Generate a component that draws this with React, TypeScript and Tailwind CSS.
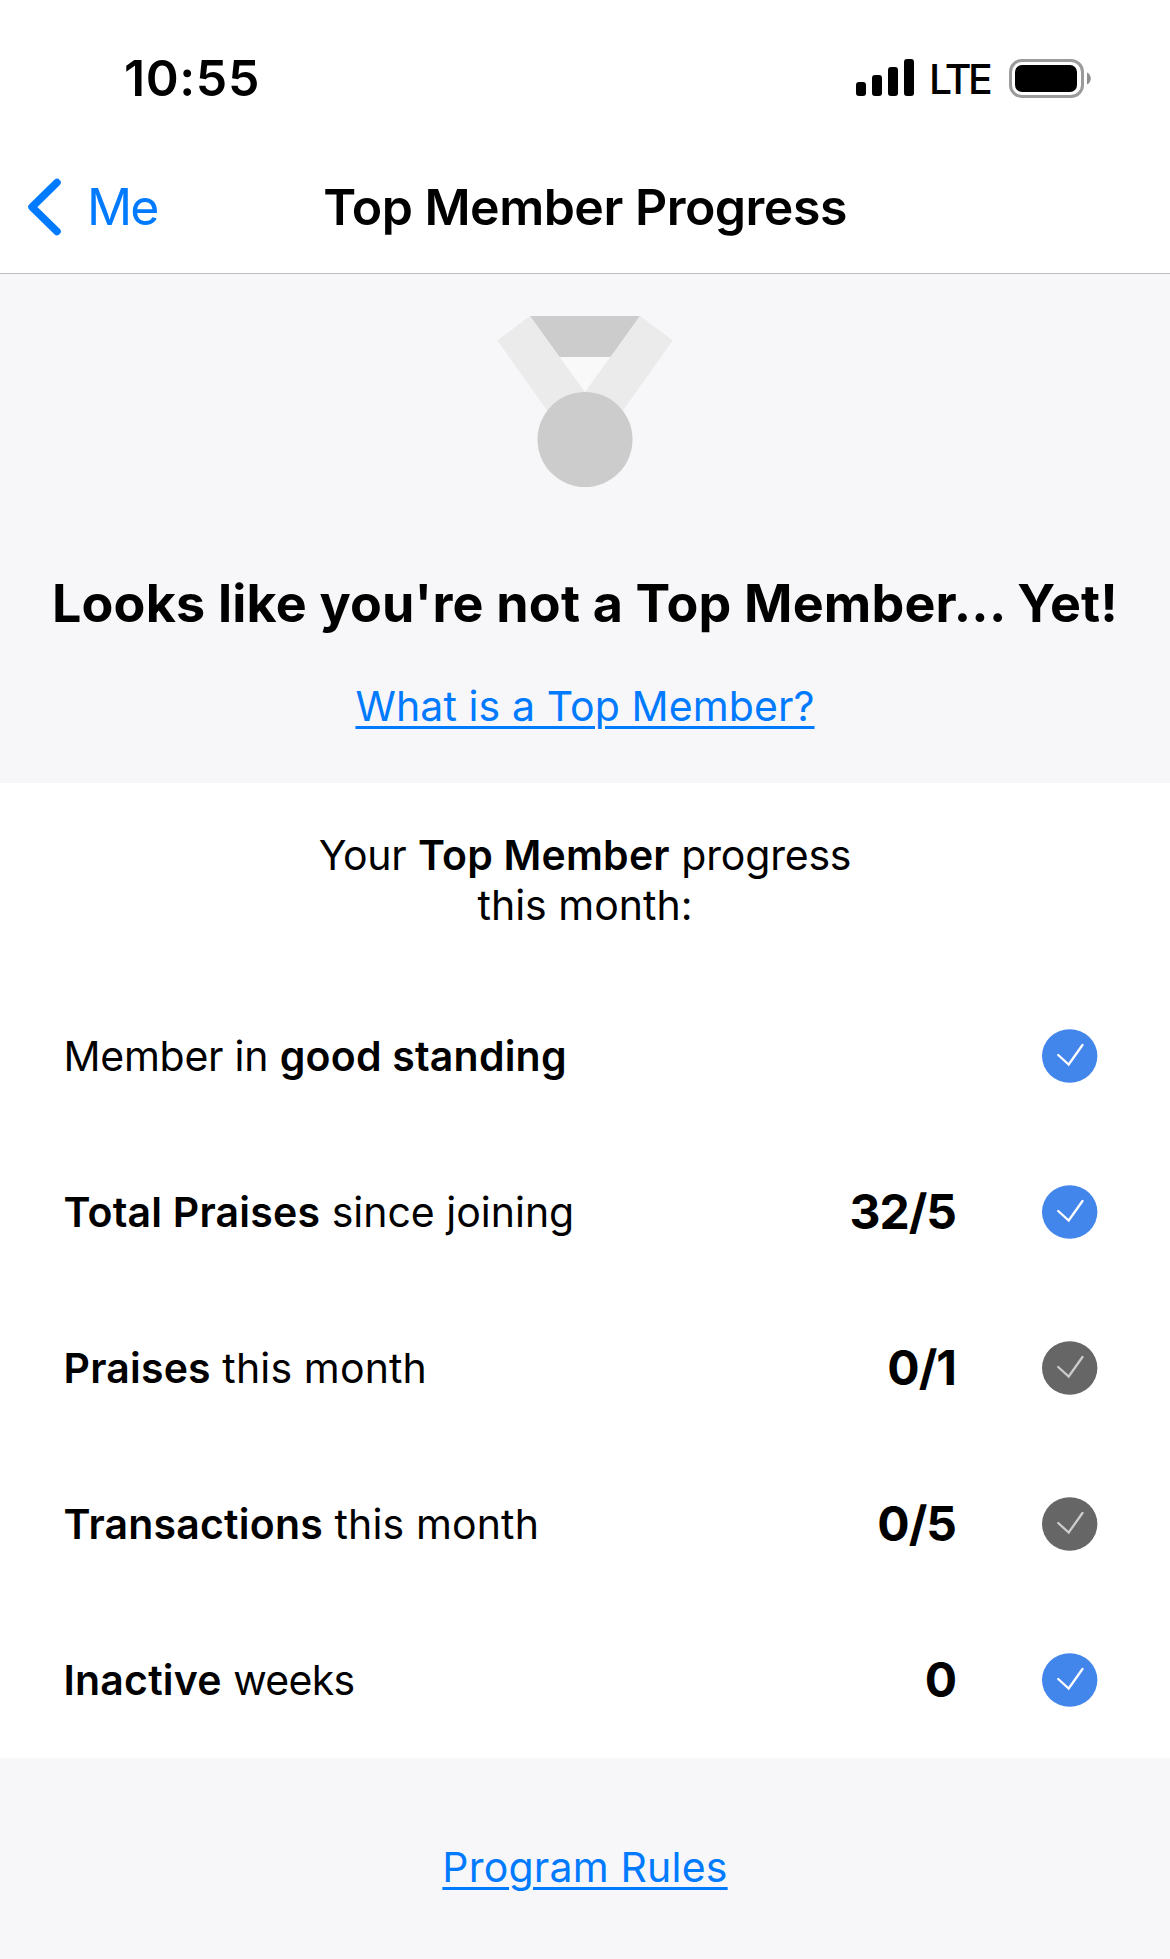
import type { ReactNode } from "react";
import clsx from "clsx";

type Requirement = {
  id: string;
  label: ReactNode;
  value?: string;
  done: boolean;
};

function Strong({ children }: { children: ReactNode }) {
  return <b className="font-semibold tracking-[0.2px]">{children}</b>;
}

const requirements: Requirement[] = [
  {
    id: "standing",
    label: (
      <>
        <span className="tracking-[-0.25px]">Member in</span> <Strong>good standing</Strong>
      </>
    ),
    done: true,
  },
  {
    id: "total",
    label: (
      <>
        <Strong>Total Praises</Strong> since joining
      </>
    ),
    value: "32/5",
    done: true,
  },
  {
    id: "praises",
    label: (
      <>
        <Strong>Praises</Strong> <span className="tracking-[0.15px]">this month</span>
      </>
    ),
    value: "0/1",
    done: false,
  },
  {
    id: "transactions",
    label: (
      <>
        <Strong>Transactions</Strong> <span className="tracking-[0.15px]">this month</span>
      </>
    ),
    value: "0/5",
    done: false,
  },
  {
    id: "inactive",
    label: (
      <>
        <Strong>Inactive</Strong> <span className="tracking-[-0.7px]">weeks</span>
      </>
    ),
    value: "0",
    done: true,
  },
];

function StatusBar() {
  return (
    <div className="flex h-[156px] items-center justify-between pr-[79px] pl-[124px]">
      <span className="text-[50px] leading-none font-semibold tracking-[0.6px]">10:55</span>
      <div className="flex items-center">
        <svg width="58" height="38" viewBox="0 0 58 38">
          <rect x="0" y="23" width="10" height="14" rx="3" />
          <rect x="16" y="16" width="10" height="21" rx="3" />
          <rect x="32" y="8" width="10" height="29" rx="3" />
          <rect x="48" y="0" width="10" height="37" rx="3" />
        </svg>
        <span className="ml-[15px] w-[65px] pt-0.5 text-[41px] leading-none font-medium tracking-[-3.6px]">
          LTE
        </span>
        <svg className="ml-[15px]" width="82" height="39" viewBox="0 0 82 39">
          <rect x="1.5" y="1.5" width="72" height="36" rx="11.5" fill="none" stroke="#9b9b9b" strokeWidth="3" />
          <rect x="6" y="6" width="62" height="27" rx="7" />
          <path d="M78 13.5c5 2 5 10 0 12z" fill="#8e8e8e" />
        </svg>
      </div>
    </div>
  );
}

function NavBar() {
  return (
    <nav className="grid h-[118px] grid-cols-[1fr_auto_1fr] border-b border-[#bcbcbf] pb-[15px]">
      <button type="button" className="flex items-center pl-[26px] text-[#007aff]">
        <svg width="37" height="58" viewBox="0 0 37 58" fill="none">
          <path
            d="M31 4.5 6 29l25 24.5"
            stroke="currentColor"
            strokeWidth="7.5"
            strokeLinecap="round"
            strokeLinejoin="round"
          />
        </svg>
        <span className="ml-[24px] text-[50px] leading-none tracking-[-2px]">Me</span>
      </button>
      <h1 className="self-center text-[50px] leading-none font-semibold tracking-[-0.5px]">
        Top Member Progress
      </h1>
    </nav>
  );
}

function Medal() {
  return (
    <svg width="176" height="171" viewBox="0 0 176 171">
      <path d="M33 0h110l-29 41H62z" fill="#ccc" />
      <path d="M62 41h52L88 77z" fill="#f9f9fa" />
      <path d="M.3 24.5 33 0l55 76v43H67.500z" fill="#ebebeb" />
      <path d="M175.700 24.500 143 0 88 76v43h20.500z" fill="#ebebeb" />
      <circle cx="88" cy="123.500" r="47.500" fill="#ccc" />
    </svg>
  );
}

function CheckBadge({ done }: { done: boolean }) {
  return (
    <svg width="56" height="54" viewBox="0 0 56 54">
      <ellipse cx="27.700" cy="27" rx="27.700" ry="26.800" fill={done ? "#4285eb" : "#666"} />
      <path
        d="M16.200 26 26.700 35.500 40.500 16"
        fill="none"
        stroke={done ? "#fff" : "#ccc"}
        strokeWidth="2.300"
        strokeLinecap="round"
      />
    </svg>
  );
}

function TextLink({ children, className }: { children: ReactNode; className?: string }) {
  return (
    <a
      href="#"
      className={clsx(
        "text-[41px] leading-[50px] text-[#007aff] underline decoration-[3px] underline-offset-[5px]",
        className,
      )}
    >
      {children}
    </a>
  );
}

export default function App() {
  return (
    <div className="flex h-[1959px] w-[1170px] flex-col overflow-hidden bg-white font-['Inter',sans-serif] text-black">
      <StatusBar />
      <NavBar />

      <section className="flex h-[509px] flex-col items-center bg-[#f7f7f9] pt-[42px]">
        <Medal />
        <h2 className="mt-[86px] text-[52px] leading-[62px] font-bold tracking-[0.2px] whitespace-nowrap">
          Looks like you're not a Top Member... Yet!
        </h2>
        <TextLink className="mt-[46px] tracking-[0.1px]">What is a Top Member?</TextLink>
      </section>

      <section className="pt-[47px]">
        <p className="text-center text-[41px] leading-[50px]">
          <span className="tracking-[-0.3px]">Your</span> <Strong>Top Member</Strong>{" "}
          <span className="tracking-[-0.2px]">progress</span>
          <br />
          this month:
        </p>
        <ul className="mt-12">
          {requirements.map((item) => (
            <li key={item.id} className="flex h-[156px] items-center pr-[72px] pl-[63.5px]">
              <span className="flex-1 pt-0.5 text-[41px]">{item.label}</span>
              <span className="text-[48px] font-bold tracking-[-1px]">{item.value}</span>
              <span className="ml-[86px]">
                <CheckBadge done={item.done} />
              </span>
            </li>
          ))}
        </ul>
      </section>

      <footer className="flex flex-1 flex-col items-center bg-[#f7f7f9] pt-[84px]">
        <TextLink className="tracking-[0.2px]">Program Rules</TextLink>
      </footer>
    </div>
  );
}
